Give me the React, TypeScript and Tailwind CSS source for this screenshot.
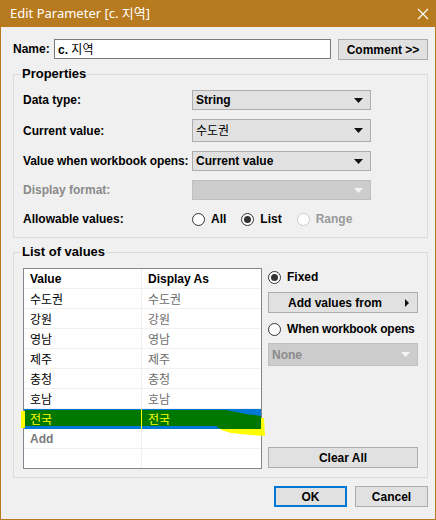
import React from "react";

const FONT = '"Liberation Sans", "Noto Sans CJK KR", sans-serif';
const KR = '"Noto Sans CJK KR", "Liberation Sans", sans-serif';

function Arrow({ disabled }: { disabled?: boolean }) {
  return (
    <svg width="9" height="5" viewBox="0 0 9 5" className="shrink-0">
      <polygon points="0,0 9,0 4.5,5" fill={disabled ? "#f4f4f4" : "#111"} />
    </svg>
  );
}

function Select({ children, disabled, h = "h-[20px]" }: { children?: React.ReactNode; disabled?: boolean; h?: string }) {
  return (
    <div
      className={`w-[179px] ${h} flex items-center justify-between pl-[3px] pr-[7px] border ${
        disabled ? "bg-[#cccccc] border-[#bfbfbf]" : "bg-[#e1e1e1] border-[#adadad]"
      }`}
    >
      <span className="text-[12px] font-bold text-black leading-none">{children}</span>
      <Arrow disabled={disabled} />
    </div>
  );
}

function Radio({ checked, disabled }: { checked?: boolean; disabled?: boolean }) {
  return (
    <span
      className={`w-[13px] h-[13px] rounded-full border flex items-center justify-center bg-white shrink-0 ${
        disabled ? "border-[#cccccc]" : "border-[#333333]"
      }`}
    >
      {checked && <span className="w-[7px] h-[7px] rounded-full bg-[#333333]" />}
    </span>
  );
}

const rows = ["수도권", "강원", "영남", "제주", "충청", "호남"];

export default function App() {
  return (
    <div
      className="w-[436px] h-[520px] bg-[#f0f0f0] border-x border-b border-[#b87a1e] flex flex-col overflow-hidden"
      style={{ fontFamily: FONT }}
    >
      {/* Title bar */}
      <div className="h-[27px] bg-[#b87a1e] flex items-center justify-between pl-[9px] pr-[5px] shrink-0">
        <span className="text-white text-[13px] leading-none" style={{ fontFamily: '"Noto Sans", "Noto Sans CJK KR", sans-serif' }}>
          Edit Parameter [c. 지역]
        </span>
        <svg width="12" height="12" viewBox="0 0 12 12" className="mr-[1px]">
          <path d="M1 1 L11 11 M11 1 L1 11" stroke="white" strokeWidth="1.2" />
        </svg>
      </div>

      <div className="flex-1 pl-[12px] pr-[7px] pt-[12px] flex flex-col">
        {/* Name row */}
        <div className="flex items-start h-[21px]">
          <span className="w-[41px] text-[12px] font-bold text-black leading-[20px]">Name:</span>
          <div className="w-[277px] h-[20px] bg-white border border-[#7a7a7a] flex items-center pl-[3px]">
            <span className="text-[12px] text-black leading-none">
              <b>c.</b> <span style={{ fontFamily: KR }}>지역</span>
            </span>
          </div>
          <button className="ml-[7px] w-[90px] h-[21px] bg-[#e1e1e1] border border-[#adadad] text-[12px] font-bold text-black leading-none">
            Comment &gt;&gt;
          </button>
        </div>

        {/* Properties */}
        <fieldset className="mt-[7px] border border-[#dcdcdc] pl-[9px] pr-[9px] pt-[9px] pb-[8px] m-0 min-w-0">
          <legend className="ml-[-2px] px-[1px] text-[13px] font-bold text-black leading-[14px]">Properties</legend>
          <div className="grid grid-cols-[169px_179px] items-center gap-y-[9px]">
            <span className="text-[12px] font-bold text-black">Data type:</span>
            <Select>String</Select>
            <span className="text-[12px] font-bold text-black">Current value:</span>
            <Select h="h-[23px]">
              <span className="font-normal" style={{ fontFamily: KR }}>수도권</span>
            </Select>
            <span className="text-[12px] font-bold text-black whitespace-nowrap tracking-[-0.1px]">Value when workbook opens:</span>
            <Select>Current value</Select>
            <span className="text-[12px] font-bold text-[#8a8a8a]">Display format:</span>
            <Select disabled />
            <span className="text-[12px] font-bold text-black h-[20px] leading-[20px]">Allowable values:</span>
            <div className="flex items-center h-[20px]">
              <Radio />
              <span className="ml-[6px] text-[12px] font-bold text-black">All</span>
              <span className="ml-[15px]"><Radio checked /></span>
              <span className="ml-[6px] text-[12px] font-bold text-black">List</span>
              <span className="ml-[15px]"><Radio disabled /></span>
              <span className="ml-[6px] text-[12px] font-bold text-[#9a9a9a]">Range</span>
            </div>
          </div>
        </fieldset>

        {/* List of values */}
        <fieldset className="mt-[7px] border border-[#dcdcdc] pl-[9px] pr-[9px] pt-[9px] pb-[8px] m-0 min-w-0">
          <legend className="ml-[-2px] px-[1px] text-[13px] font-bold text-black leading-[14px]">List of values</legend>
          <div className="flex">
            {/* Table */}
            <div className="relative w-[239px] h-[201px] border border-[#828790] bg-white flex flex-col">
              <div className="flex h-[20px] border-b border-[#f0f0f0]">
                <div className="w-[118px] border-r border-[#f0f0f0] pl-[6px] flex items-center text-[12px] font-bold text-black">Value</div>
                <div className="flex-1 pl-[6px] flex items-center text-[12px] font-bold text-black">Display As</div>
              </div>
              {rows.map((r) => (
                <div key={r} className="flex h-[20px] border-b border-[#f0f0f0]" style={{ fontFamily: KR }}>
                  <div className="w-[118px] border-r border-[#f0f0f0] pl-[6px] flex items-center text-[12px] text-black">{r}</div>
                  <div className="flex-1 pl-[6px] flex items-center text-[12px] text-[#6d6d6d]">{r}</div>
                </div>
              ))}
              <div className="flex h-[20px] bg-[#0078d7]" style={{ fontFamily: KR }}>
                <div className="w-[118px] border-r border-[#ffff00] pl-[6px] flex items-center text-[12px] text-[#ffff00] relative z-10">전국</div>
                <div className="flex-1 pl-[6px] flex items-center text-[12px] text-[#ffff00] relative z-10">전국</div>
              </div>
              <div className="flex h-[20px] border-b border-[#f0f0f0]">
                <div className="w-[118px] border-r border-[#f0f0f0] pl-[6px] flex items-center text-[12px] font-bold text-[#7a7a7a]">Add</div>
                <div className="flex-1" />
              </div>
              <div className="flex flex-1">
                <div className="w-[118px] border-r border-[#f0f0f0]" />
                <div className="flex-1" />
              </div>
              {/* annotation highlight overlay */}
              <svg className="absolute left-[-3px] top-[139px]" width="245" height="30" viewBox="0 0 245 30">
                <polygon points="4,2 195,2 205,2 215,4 225,6 240,8 240,20 200,20 195,18 4,18" fill="#007800" />
                <rect x="0" y="3" width="4" height="17" fill="#ffff00" />
                <polygon points="198,19 240,19 240,10 243,10 244,28 230,27 210,25 200,22" fill="#ffff00" />
                <polygon points="195,19 240,19 240,21 200,21" fill="#007800" />
              </svg>
            </div>

            {/* Right column */}
            <div className="ml-[6px] w-[150px] flex flex-col">
              <div className="flex items-center h-[18px]">
                <Radio checked />
                <span className="ml-[6px] text-[12px] font-bold text-black">Fixed</span>
              </div>
              <button className="mt-[6px] w-[150px] h-[21px] bg-[#e1e1e1] border border-[#adadad] flex items-center justify-between pl-[19px] pr-[8px]">
                <span className="text-[12px] font-bold text-black leading-none">Add values from</span>
                <svg width="4" height="8" viewBox="0 0 4 8">
                  <polygon points="0,0 4,4 0,8" fill="#111" />
                </svg>
              </button>
              <div className="mt-[7px] flex items-center h-[18px]">
                <Radio />
                <span className="ml-[6px] text-[12px] font-bold text-black whitespace-nowrap tracking-[-0.2px]">When workbook opens</span>
              </div>
              <div className="mt-[5px] w-[150px] h-[23px] bg-[#cccccc] border border-[#bfbfbf] flex items-center justify-between pl-[3px] pr-[7px]">
                <span className="text-[12px] font-bold text-[#8a8a8a] leading-none">None</span>
                <Arrow disabled />
              </div>
              <button className="mt-auto mb-[1px] w-[150px] h-[21px] bg-[#e1e1e1] border border-[#adadad] text-[12px] font-bold text-black leading-none">
                Clear All
              </button>
            </div>
          </div>
        </fieldset>

        {/* Bottom buttons */}
        <div className="mt-[8px] flex justify-end gap-[8px]">
          <button className="w-[73px] h-[21px] bg-[#e1e1e1] border-2 border-[#0078d7] text-[12px] font-bold text-black leading-none">
            OK
          </button>
          <button className="w-[73px] h-[21px] bg-[#e1e1e1] border border-[#adadad] text-[12px] font-bold text-black leading-none">
            Cancel
          </button>
        </div>
      </div>
    </div>
  );
}
